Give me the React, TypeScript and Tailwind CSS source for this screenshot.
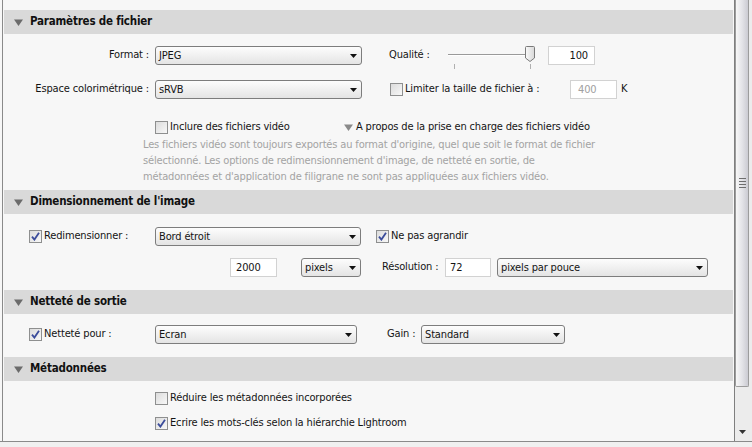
import React from 'react';

const font = "font-['DejaVu_Sans_Condensed','Liberation_Sans',sans-serif]";

function Triangle({ color = '#6b6b6b' }: { color?: string }) {
  return (
    <svg width="9" height="7" viewBox="0 0 9 7" className="shrink-0">
      <path d="M0 0.5 H9 L4.5 7 Z" fill={color} />
    </svg>
  );
}

function Check({ checked }: { checked?: boolean }) {
  return (
    <span className="relative flex h-[13px] w-[13px] shrink-0 items-center justify-center border border-[#8e8f8f] bg-gradient-to-br from-[#dcdcdc] to-[#f8f8f8]">
      {checked && (
        <svg width="9" height="9" viewBox="0 0 9 9">
          <path d="M1 4.6 L3.4 7.6 L8 0.8" fill="none" stroke="#3b4c9b" strokeWidth="1.8" />
        </svg>
      )}
    </span>
  );
}

function Select({ value, width }: { value: string; width: string }) {
  return (
    <div
      className={`flex h-[19px] shrink-0 items-center justify-between rounded-[3px] border border-[#7d7d7d] bg-gradient-to-b from-[#fdfdfd] to-[#e4e4e4] pl-[3px] pr-[4px] ${width}`}
    >
      <span className="leading-none">{value}</span>
      <svg width="7" height="4" viewBox="0 0 7 4">
        <path d="M0 0 H7 L3.5 4 Z" fill="#111" />
      </svg>
    </div>
  );
}

function Field({ value, width, extra }: { value: string; width: string; extra: string }) {
  return (
    <div className={`flex h-[19px] shrink-0 items-center border border-[#d2d2d2] bg-white ${width} ${extra}`}>
      <span className="leading-none">{value}</span>
    </div>
  );
}

function Header({ title }: { title: string }) {
  return (
    <div className="flex h-[24px] items-center bg-[#d9d9d9] pl-[10px]">
      <Triangle />
      <span className="ml-[7px] text-[11.5px] font-bold tracking-[-0.2px] text-[#111]">{title}</span>
    </div>
  );
}

function Slider() {
  return (
    <svg width="90" height="19" viewBox="0 0 90 19" className="shrink-0 overflow-visible">
      <line x1="2" y1="8.5" x2="80" y2="8.5" stroke="#9a9a9a" />
      <line x1="2" y1="9.5" x2="80" y2="9.5" stroke="#ffffff" />
      <line x1="8.5" y1="18" x2="8.5" y2="23" stroke="#b0b0b0" />
      <line x1="84.5" y1="18" x2="84.5" y2="23" stroke="#b0b0b0" />
      <defs>
        <linearGradient id="thumb" x1="0" y1="0" x2="1" y2="0">
          <stop offset="0" stopColor="#fafafa" />
          <stop offset="1" stopColor="#d8d8d8" />
        </linearGradient>
      </defs>
      <path d="M79.5 1.5 Q79.5 0.5 80.5 0.5 H87.5 Q88.5 0.5 88.5 1.5 V12 L84 15.5 L79.5 12 Z" fill="url(#thumb)" stroke="#7a7a7a" />
    </svg>
  );
}

export default function App() {
  return (
    <div className={`flex h-[447px] w-[752px] flex-col overflow-hidden bg-[#f0f0f0] text-[11px] tracking-[-0.15px] text-[#141414] ${font}`}>
      <div className="flex h-[442px] border-b border-[#8a8a8a] bg-[#f7f7f7]">
        {/* Scrollable content */}
        <div className="ml-[2px] flex w-[732px] flex-col border-l border-[#8a8a8a] pl-[1px] pr-[1px] pt-[10px]">
          <Header title="Paramètres de fichier" />
          <div className="flex flex-col pb-[5px] pt-[12px]">
            <div className="flex h-[19px] items-center">
              <span className="w-[145px] text-right">Format :</span>
              <div className="ml-[6px]">
                <Select value="JPEG" width="w-[207px]" />
              </div>
              <span className="ml-[27px] w-[57px]">Qualité :</span>
              <Slider />
              <div className="ml-[12px]">
                <Field value="100" width="w-[47px]" extra="justify-end pr-[6px]" />
              </div>
            </div>
            <div className="mt-[15px] flex h-[19px] items-center">
              <span className="w-[145px] text-right">Espace colorimétrique :</span>
              <div className="ml-[6px]">
                <Select value="sRVB" width="w-[207px]" />
              </div>
              <div className="ml-[28px] flex w-[180px] items-center">
                <Check />
                <span className="ml-[2px]">Limiter la taille de fichier à :</span>
              </div>
              <Field value="400" width="w-[47px]" extra="pl-[7px] text-[#a0a0a0]" />
              <span className="ml-[4px]">K</span>
            </div>
            <div className="mt-[20px] flex h-[16px] items-center pl-[151px]">
              <div className="flex w-[189px] items-center">
                <Check />
                <span className="ml-[2px]">Inclure des fichiers vidéo</span>
              </div>
              <Triangle color="#8a8a8a" />
              <span className="ml-[3px]">A propos de la prise en charge des fichiers vidéo</span>
            </div>
            <p className="mt-[2px] pl-[139px] leading-[16px] text-[#a3a3a3]">
              Les fichiers vidéo sont toujours exportés au format d'origine, quel que soit le format de fichier
              <br />
              sélectionné. Les options de redimensionnement d'image, de netteté en sortie, de
              <br />
              métadonnées et d'application de filigrane ne sont pas appliquées aux fichiers vidéo.
            </p>
          </div>

          <Header title="Dimensionnement de l'image" />
          <div className="flex flex-col pb-[13px] pt-[13px]">
            <div className="flex h-[19px] items-center pl-[25px]">
              <div className="flex w-[126px] items-center">
                <Check checked />
                <span className="ml-[2px]">Redimensionner :</span>
              </div>
              <Select value="Bord étroit" width="w-[206px]" />
              <div className="ml-[15px] flex items-center">
                <Check checked />
                <span className="ml-[2px]">Ne pas agrandir</span>
              </div>
            </div>
            <div className="mt-[12px] flex h-[19px] items-center pl-[226px]">
              <Field value="2000" width="w-[47px]" extra="pl-[5px]" />
              <div className="ml-[24px]">
                <Select value="pixels" width="w-[60px]" />
              </div>
              <span className="ml-[21px] w-[63px]">Résolution :</span>
              <Field value="72" width="w-[46px]" extra="pl-[4px]" />
              <div className="ml-[6px]">
                <Select value="pixels par pouce" width="w-[211px]" />
              </div>
            </div>
          </div>

          <Header title="Netteté de sortie" />
          <div className="flex flex-col pb-[13px] pt-[11px]">
            <div className="flex h-[19px] items-center pl-[25px]">
              <div className="flex w-[126px] items-center">
                <Check checked />
                <span className="ml-[2px]">Netteté pour :</span>
              </div>
              <Select value="Ecran" width="w-[202px]" />
              <span className="ml-[30px] w-[34px]">Gain :</span>
              <Select value="Standard" width="w-[144px]" />
            </div>
          </div>

          <Header title="Métadonnées" />
          <div className="flex flex-col pb-[10px] pt-[9px] pl-[151px]">
            <div className="flex h-[16px] items-center">
              <Check />
              <span className="ml-[2px]">Réduire les métadonnées incorporées</span>
            </div>
            <div className="mt-[9px] flex h-[16px] items-center">
              <Check checked />
              <span className="ml-[2px]">Ecrire les mots-clés selon la hiérarchie Lightroom</span>
            </div>
          </div>
        </div>

        {/* Scrollbar */}
        <div className="flex w-[18px] flex-col border-l border-[#7f7f7f] bg-[#ececec]">
          <div className="flex h-[387px] w-[14px] flex-col items-center rounded-b-[2px] border border-t-0 border-[#9c9c9c] bg-gradient-to-r from-[#f7f7f7] via-[#e4e4e8] to-[#cbcbd2] pt-[178px]">
            <div className="flex w-[7px] flex-col gap-[2px]">
              <div className="h-px bg-[#6e6e6e]" />
              <div className="h-px bg-[#6e6e6e]" />
              <div className="h-px bg-[#6e6e6e]" />
              <div className="h-px bg-[#6e6e6e]" />
            </div>
          </div>
          <div className="flex-1" />
          <div className="flex h-[18px] items-center justify-center pr-[2px]">
            <svg width="7" height="4" viewBox="0 0 7 4">
              <path d="M0 0 H7 L3.5 4 Z" fill="#333" />
            </svg>
          </div>
        </div>
      </div>
    </div>
  );
}
